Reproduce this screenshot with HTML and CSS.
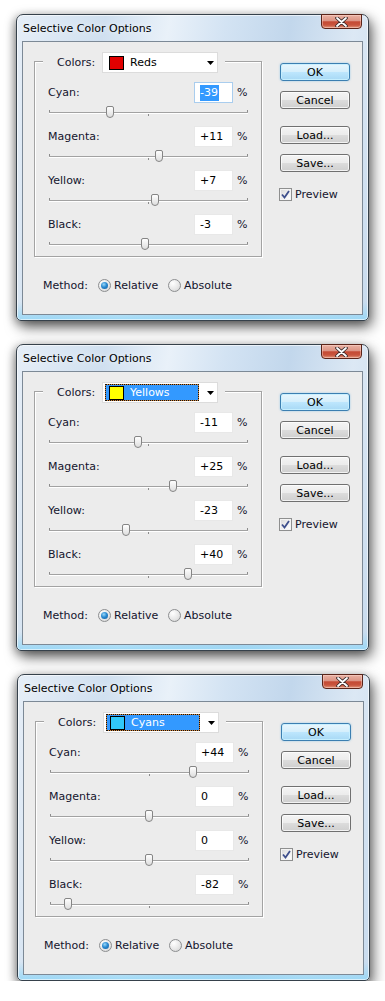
FILE: index.html
```html
<!DOCTYPE html>
<html>
<head>
<meta charset="utf-8">
<title>Selective Color Options</title>
<link rel="stylesheet" href="styles.css">
</head>
<body>
<div class="page">

  <!-- Dialog 1: Reds -->
  <div class="window">
    <div class="titlebar">
      <span class="title">Selective Color Options</span>
      <div class="close"><svg width="13" height="10" viewBox="0 0 13 10"><path d="M2 1 L11 9 M11 1 L2 9" stroke="#3a2a2a" stroke-width="3.6" stroke-linecap="round"/><path d="M2 1 L11 9 M11 1 L2 9" stroke="#fff" stroke-width="1.8" stroke-linecap="round"/></svg></div>
    </div>
    <div class="client">
      <div class="main">
        <div class="group">
          <div class="legend">
            <span class="legend-label">Colors:</span>
            <div class="combo">
              <div class="combo-item"><span class="swatch red"></span><span class="combo-text">Reds</span></div>
              <svg class="combo-arrow" width="7" height="4" viewBox="0 0 7 4"><path d="M0 0 H7 L3.5 4 Z" fill="#000"/></svg>
            </div>
          </div>
          <div class="channel">
            <div class="ch-row"><span class="ch-label">Cyan:</span><span class="field focus"><span class="sel-text">-39</span></span><span class="pct">%</span></div>
            <div class="slider"><span class="thumb" style="left:57px"></span></div>
          </div>
          <div class="channel">
            <div class="ch-row"><span class="ch-label">Magenta:</span><span class="field">+11</span><span class="pct">%</span></div>
            <div class="slider"><span class="thumb" style="left:106px"></span></div>
          </div>
          <div class="channel">
            <div class="ch-row"><span class="ch-label">Yellow:</span><span class="field">+7</span><span class="pct">%</span></div>
            <div class="slider"><span class="thumb" style="left:102px"></span></div>
          </div>
          <div class="channel">
            <div class="ch-row"><span class="ch-label">Black:</span><span class="field">-3</span><span class="pct">%</span></div>
            <div class="slider"><span class="thumb" style="left:92px"></span></div>
          </div>
        </div>
        <div class="method">
          <span class="method-label">Method:</span>
          <span class="opt first"><span class="radio on"></span>Relative</span>
          <span class="opt"><span class="radio"></span>Absolute</span>
        </div>
      </div>
      <div class="buttons">
        <div class="btn default">OK</div>
        <div class="btn cancel">Cancel</div>
        <div class="btn load">Load...</div>
        <div class="btn save">Save...</div>
        <div class="check-row"><span class="checkbox"><svg width="9" height="9" viewBox="0 0 9 9"><path d="M1 4.5 L3.5 7.5 L8 1" fill="none" stroke="#3e4f8c" stroke-width="1.8"/></svg></span>Preview</div>
      </div>
    </div>
  </div>

  <!-- Dialog 2: Yellows -->
  <div class="window">
    <div class="titlebar">
      <span class="title">Selective Color Options</span>
      <div class="close"><svg width="13" height="10" viewBox="0 0 13 10"><path d="M2 1 L11 9 M11 1 L2 9" stroke="#3a2a2a" stroke-width="3.6" stroke-linecap="round"/><path d="M2 1 L11 9 M11 1 L2 9" stroke="#fff" stroke-width="1.8" stroke-linecap="round"/></svg></div>
    </div>
    <div class="client">
      <div class="main">
        <div class="group">
          <div class="legend">
            <span class="legend-label">Colors:</span>
            <div class="combo">
              <div class="combo-item sel"><span class="swatch yellow"></span><span class="combo-text">Yellows</span></div>
              <svg class="combo-arrow" width="7" height="4" viewBox="0 0 7 4"><path d="M0 0 H7 L3.5 4 Z" fill="#000"/></svg>
            </div>
          </div>
          <div class="channel">
            <div class="ch-row"><span class="ch-label">Cyan:</span><span class="field">-11</span><span class="pct">%</span></div>
            <div class="slider"><span class="thumb" style="left:85px"></span></div>
          </div>
          <div class="channel">
            <div class="ch-row"><span class="ch-label">Magenta:</span><span class="field">+25</span><span class="pct">%</span></div>
            <div class="slider"><span class="thumb" style="left:120px"></span></div>
          </div>
          <div class="channel">
            <div class="ch-row"><span class="ch-label">Yellow:</span><span class="field">-23</span><span class="pct">%</span></div>
            <div class="slider"><span class="thumb" style="left:73px"></span></div>
          </div>
          <div class="channel">
            <div class="ch-row"><span class="ch-label">Black:</span><span class="field">+40</span><span class="pct">%</span></div>
            <div class="slider"><span class="thumb" style="left:135px"></span></div>
          </div>
        </div>
        <div class="method">
          <span class="method-label">Method:</span>
          <span class="opt first"><span class="radio on"></span>Relative</span>
          <span class="opt"><span class="radio"></span>Absolute</span>
        </div>
      </div>
      <div class="buttons">
        <div class="btn default">OK</div>
        <div class="btn cancel">Cancel</div>
        <div class="btn load">Load...</div>
        <div class="btn save">Save...</div>
        <div class="check-row"><span class="checkbox"><svg width="9" height="9" viewBox="0 0 9 9"><path d="M1 4.5 L3.5 7.5 L8 1" fill="none" stroke="#3e4f8c" stroke-width="1.8"/></svg></span>Preview</div>
      </div>
    </div>
  </div>

  <!-- Dialog 3: Cyans -->
  <div class="window shift">
    <div class="titlebar">
      <span class="title">Selective Color Options</span>
      <div class="close"><svg width="13" height="10" viewBox="0 0 13 10"><path d="M2 1 L11 9 M11 1 L2 9" stroke="#3a2a2a" stroke-width="3.6" stroke-linecap="round"/><path d="M2 1 L11 9 M11 1 L2 9" stroke="#fff" stroke-width="1.8" stroke-linecap="round"/></svg></div>
    </div>
    <div class="client">
      <div class="main">
        <div class="group">
          <div class="legend">
            <span class="legend-label">Colors:</span>
            <div class="combo">
              <div class="combo-item sel"><span class="swatch cyan"></span><span class="combo-text">Cyans</span></div>
              <svg class="combo-arrow" width="7" height="4" viewBox="0 0 7 4"><path d="M0 0 H7 L3.5 4 Z" fill="#000"/></svg>
            </div>
          </div>
          <div class="channel">
            <div class="ch-row"><span class="ch-label">Cyan:</span><span class="field">+44</span><span class="pct">%</span></div>
            <div class="slider"><span class="thumb" style="left:139px"></span></div>
          </div>
          <div class="channel">
            <div class="ch-row"><span class="ch-label">Magenta:</span><span class="field">0</span><span class="pct">%</span></div>
            <div class="slider"><span class="thumb" style="left:95px"></span></div>
          </div>
          <div class="channel">
            <div class="ch-row"><span class="ch-label">Yellow:</span><span class="field">0</span><span class="pct">%</span></div>
            <div class="slider"><span class="thumb" style="left:95px"></span></div>
          </div>
          <div class="channel">
            <div class="ch-row"><span class="ch-label">Black:</span><span class="field">-82</span><span class="pct">%</span></div>
            <div class="slider"><span class="thumb" style="left:14px"></span></div>
          </div>
        </div>
        <div class="method">
          <span class="method-label">Method:</span>
          <span class="opt first"><span class="radio on"></span>Relative</span>
          <span class="opt"><span class="radio"></span>Absolute</span>
        </div>
      </div>
      <div class="buttons">
        <div class="btn default">OK</div>
        <div class="btn cancel">Cancel</div>
        <div class="btn load">Load...</div>
        <div class="btn save">Save...</div>
        <div class="check-row"><span class="checkbox"><svg width="9" height="9" viewBox="0 0 9 9"><path d="M1 4.5 L3.5 7.5 L8 1" fill="none" stroke="#3e4f8c" stroke-width="1.8"/></svg></span>Preview</div>
      </div>
    </div>
  </div>

</div>
</body>
</html>
```

FILE: styles.css
```css
* { box-sizing: border-box; }

body {
  margin: 0;
  background: #ffffff;
  font-family: "DejaVu Sans", Tahoma, sans-serif;
  font-size: 11px;
  line-height: 13px;
  color: #14142c;
}

.page {
  display: flex;
  flex-direction: column;
  align-items: flex-start;
  gap: 23px;
  padding: 14px 0 0 16px;
}

/* ---------- Aero window frame ---------- */
.window {
  width: 353px;
  height: 307px;
  border: 1px solid #36414b;
  border-radius: 7px 7px 5px 5px;
  padding: 0 5px 5px;
  display: flex;
  flex-direction: column;
  background:
    linear-gradient(to top, rgba(150, 215, 246, 0.9) 0px, rgba(150, 215, 246, 0) 18px),
    linear-gradient(100deg, #e6eef7 0%, #d0e0f0 22%, #e9f1f9 38%, #d3e3f3 52%, #c2d7ec 68%, #dce8f4 84%, #c8dbee 100%);
  box-shadow:
    3px 6px 14px rgba(0, 0, 0, 0.6),
    -2px 2px 9px rgba(0, 0, 0, 0.28),
    inset 0 0 0 1px rgba(255, 255, 255, 0.6);
}

.window.shift { margin-left: 1px; }

.titlebar {
  height: 26px;
  display: flex;
  justify-content: space-between;
}

.title {
  align-self: center;
  padding: 1px 0 0 1px;
  color: #000;
  text-shadow: 0 0 6px rgba(255, 255, 255, 0.9);
}

.close {
  width: 41px;
  height: 15px;
  margin: -1px 1px 0 0;
  border: 1px solid #5a2419;
  border-radius: 0 0 4px 4px;
  background: linear-gradient(#eab2a4 0%, #dc9484 45%, #c54a34 52%, #c8553d 78%, #e39a80 100%);
  box-shadow: inset 0 0 0 1px rgba(255, 220, 210, 0.45);
  display: flex;
  align-items: center;
  justify-content: center;
}

/* ---------- Client area ---------- */
.client {
  flex: 1;
  border: 1px solid #7c8996;
  background: #ececec;
  display: flex;
  gap: 18px;
  padding: 19px 0 0 11px;
}

.main {
  width: 228px;
  display: flex;
  flex-direction: column;
}

.group {
  border: 1px solid #a3a3a3;
  box-shadow: inset 1px 1px 0 #ffffff, 1px 1px 0 #ffffff;
  padding: 0 0 6px 0;
}

.legend {
  margin: -10px 0 9px 8px;
  width: 182px;
  height: 21px;
  padding-left: 14px;
  background: #ececec;
  display: flex;
  align-items: center;
}

.legend-label { width: 45px; }

.combo {
  width: 116px;
  height: 21px;
  border: 1px solid #dcdcdc;
  background: #ffffff;
  display: flex;
  align-items: center;
  padding-left: 2px;
}

.combo-item {
  width: 94px;
  height: 17px;
  border: 1px solid transparent;
  padding-left: 3px;
  display: flex;
  align-items: center;
  color: #000;
}

.combo-item.sel {
  border: 1px dotted #111;
  background:
    linear-gradient(#3399ff, #3399ff) padding-box,
    linear-gradient(#d0843c, #d0843c) border-box;
  color: #ffffff;
}

.swatch {
  width: 15px;
  height: 14px;
  border: 1px solid #000;
  flex: none;
}
.swatch.red { background: #e10000; }
.swatch.yellow { background: #ffff00; }
.swatch.cyan { background: #31c8f9; }

.combo-text { margin-left: 6px; }

.combo-arrow { margin-left: 8px; }

/* ---------- Channel rows ---------- */
.channel { margin-left: 13px; }
.channel + .channel { margin-top: 8px; }

.ch-row {
  height: 21px;
  display: flex;
  align-items: center;
}

.ch-label { width: 146px; }

.field {
  width: 39px;
  height: 21px;
  border: 1px solid #e8e8e8;
  background: #ffffff;
  padding-left: 5px;
  display: flex;
  align-items: center;
  color: #000;
}

.field.focus { border-color: #a9cdee; }

.sel-text {
  background: #3399ff;
  color: #ffffff;
  line-height: 16px;
  padding-right: 1px;
}

.pct { margin-left: 4px; }

.slider {
  position: relative;
  width: 199px;
  height: 12px;
  margin: 3px 0 0 1px;
  background:
    linear-gradient(#a2a2a2, #a2a2a2) 0 6px / 100% 1px no-repeat,
    linear-gradient(#ffffff, #ffffff) 0 7px / 100% 1px no-repeat,
    linear-gradient(#8c8c8c, #8c8c8c) 0 4px / 1px 4px no-repeat,
    linear-gradient(#8c8c8c, #8c8c8c) 99px 6px / 1px 4px no-repeat,
    linear-gradient(#8c8c8c, #8c8c8c) 198px 4px / 1px 4px no-repeat;
}

.thumb {
  position: absolute;
  top: 0;
  width: 8px;
  height: 12px;
  border: 1px solid #858585;
  border-radius: 2px 2px 4px 4px;
  background: linear-gradient(#fefefe, #dedede);
}

/* ---------- Method ---------- */
.method {
  height: 16px;
  margin-top: 20px;
  padding-left: 9px;
  display: flex;
  align-items: center;
}

.method-label { width: 55px; }

.opt {
  display: flex;
  align-items: center;
  gap: 3px;
}
.opt.first { width: 70px; }

.radio {
  position: relative;
  width: 13px;
  height: 13px;
  border: 1px solid #8c8e90;
  border-radius: 50%;
  background: radial-gradient(circle at 35% 30%, #ffffff 0%, #e8e8e8 55%, #cfcfcf 100%);
  flex: none;
}

.radio.on::after {
  content: "";
  position: absolute;
  left: 2px;
  top: 2px;
  width: 7px;
  height: 7px;
  border-radius: 50%;
  background: radial-gradient(circle at 40% 35%, #9ad8f8 0%, #2a8ad2 45%, #125a9a 100%);
}

/* ---------- Buttons ---------- */
.buttons {
  width: 70px;
  margin-top: 2px;
  display: flex;
  flex-direction: column;
}

.btn {
  height: 18px;
  border: 1px solid #707070;
  border-radius: 3px;
  background: linear-gradient(#f4f4f4 0%, #ececec 48%, #dcdcdc 52%, #cfcfcf 100%);
  box-shadow: inset 0 0 0 1px rgba(255, 255, 255, 0.75);
  display: flex;
  align-items: center;
  justify-content: center;
  color: #000;
}

.btn.default {
  border-color: #3c7fb1;
  background: linear-gradient(#e9f6fd 0%, #d5effc 48%, #bde6fd 52%, #a7d9f5 100%);
  box-shadow: inset 0 0 0 1px rgba(200, 240, 255, 0.9), 0 0 2px rgba(80, 170, 230, 0.6);
}

.btn.cancel { margin-top: 10px; }
.btn.load { margin-top: 17px; }
.btn.save { margin-top: 10px; }

.check-row {
  margin: 16px 0 0 -1px;
  height: 13px;
  display: flex;
  align-items: center;
  gap: 3px;
}

.checkbox {
  width: 13px;
  height: 13px;
  border: 1px solid #8e8f8f;
  background: linear-gradient(135deg, #d8d8d8 0%, #f6f6f6 70%, #ffffff 100%);
  box-shadow: inset 0 0 0 1px #f4f4f4;
  display: flex;
  align-items: center;
  justify-content: center;
  flex: none;
}
```
